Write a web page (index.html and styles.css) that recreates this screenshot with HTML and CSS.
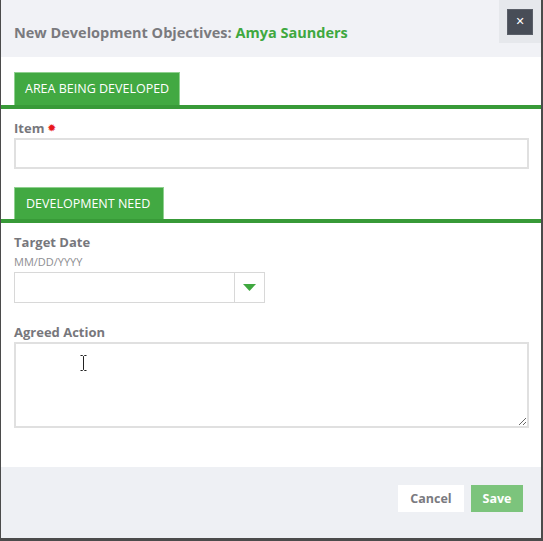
FILE: index.html
```html
<!DOCTYPE html>
<html>
<head>
<meta charset="utf-8">
<link rel="stylesheet" href="styles.css">
</head>
<body>
<div class="modal">
  <div class="header">
    <h1 class="title">New Development Objectives: <span class="name">Amya Saunders</span></h1>
    <div class="close-wrap"><button class="close">&#x2715;</button></div>
  </div>
  <div class="body">
    <div class="tabbar"><span class="tab">AREA BEING DEVELOPED</span></div>
    <div class="field">
      <label class="label">Item <span class="req">&#x2739;</span></label>
      <input class="input" type="text">
    </div>
    <div class="tabbar tabbar2"><span class="tab">DEVELOPMENT NEED</span></div>
    <div class="field">
      <label class="label">Target Date</label>
      <div class="hint">MM/DD/YYYY</div>
      <div class="date">
        <input class="date-input" type="text">
        <span class="date-btn"><svg width="13" height="7" viewBox="0 0 13 7"><path d="M0 0H13L6.5 7Z" fill="#3fa83f"/></svg></span>
      </div>
    </div>
    <div class="field field-area">
      <label class="label">Agreed Action</label>
      <textarea class="textarea"></textarea>
      <svg class="cursor" width="7" height="16" viewBox="0 0 7 16"><path d="M0.5 0.5H2.5L3.5 1.5L4.5 0.5H6.5M3.5 1.5V14.5M0.5 15.5H2.5L3.5 14.5L4.5 15.5H6.5" stroke="#222" fill="none" stroke-width="1"/></svg>
    </div>
  </div>
  <div class="footer">
    <button class="btn btn-cancel">Cancel</button>
    <button class="btn btn-save">Save</button>
  </div>
</div>
</body>
</html>
```
FILE: styles.css
```css
html, body {
  margin: 0;
  padding: 0;
  background: #4b4b4b;
}
body {
  width: 543px;
  height: 541px;
  overflow: hidden;
  font-family: "Open Sans", "Noto Sans", sans-serif;
}
.modal {
  margin-left: 1px;
  width: 540px;
  height: 538px;
  background: #fff;
  display: flex;
  flex-direction: column;
}
.header {
  height: 57px;
  background: #f1f2f6;
  display: flex;
  justify-content: space-between;
  align-items: flex-start;
}
.title {
  margin: 23px 0 0 13px;
  font-size: 14.5px;
  font-weight: 700;
  color: #7a7a7e;
  line-height: 20px;
}
.name { color: #3fa83f; }
.close-wrap {
  width: 42px;
  height: 43px;
  background: #e6e8ec;
  display: flex;
  justify-content: flex-start;
  align-items: flex-start;
}
.close {
  margin: 9px 0 0 8px;
  width: 26px;
  height: 26px;
  padding: 0;
  border: 1px solid #5a5f68;
  background: #484d57;
  color: #fff;
  font-size: 11px;
  font-weight: 700;
  line-height: 24px;
  font-family: "DejaVu Sans", sans-serif;
}
.body {
  flex: 1;
  padding: 15px 0 0 0;
  display: flex;
  flex-direction: column;
}
.tabbar {
  border-bottom: 4px solid #389a38;
  padding-left: 13px;
  display: flex;
}
.tab {
  background: #42a942;
  color: #fff;
  font-size: 12.5px;
  line-height: 32px;
  height: 32px;
  padding: 0 10px;
  border: 1px solid #8fd08f;
  border-bottom: none;
}
.tabbar2 { margin-top: 18px; }
.tabbar2 .tab { height: 31px; line-height: 31px; padding: 0 13px 0 11px; }
.field {
  padding: 0 14px 0 13px;
  display: flex;
  flex-direction: column;
}
.label {
  margin-top: 10px;
  font-size: 13px;
  font-weight: 700;
  color: #77777c;
  line-height: 18px;
  height: 18px;
}
.req {
  color: #e8161b;
  font-size: 9px;
  vertical-align: 2px;
}
.input {
  margin-top: 1px;
  height: 31px;
  box-sizing: border-box;
  border: 2px solid #e0e0e0;
  outline: none;
  width: 515px;
}
.hint {
  margin-top: 3px;
  font-size: 11px;
  color: #8e8e92;
  line-height: 16px;
}
.date {
  margin-top: 2px;
  width: 251px;
  height: 31px;
  box-sizing: border-box;
  border: 1px solid #d8d8d8;
  display: flex;
}
.date-input {
  flex: 1;
  border: none;
  outline: none;
  min-width: 0;
  padding: 0;
}
.date-btn {
  width: 29px;
  border-left: 1px solid #d8d8d8;
  display: flex;
  align-items: center;
  justify-content: center;
}
.field-area { position: relative; }
.field-area .label { margin-top: 20px; }
.textarea {
  margin-top: 1px;
  width: 515px;
  height: 86px;
  box-sizing: border-box;
  border: 2px solid #e0e0e0;
  outline: none;
  resize: vertical;
}
.cursor {
  position: absolute;
  left: 79px;
  top: 52px;
}
.footer {
  margin-top: 37px;
  height: 71px;
  background: #eef0f4;
  display: flex;
  justify-content: flex-end;
  align-items: flex-start;
  gap: 7px;
  padding-right: 18px;
}
.btn {
  margin-top: 18px;
  height: 27px;
  border: none;
  font-family: "Open Sans", "Noto Sans", sans-serif;
  font-weight: 700;
  font-size: 12.5px;
  padding: 0;
}
.btn-cancel {
  width: 66px;
  background: #fff;
  color: #7a7a80;
}
.btn-save {
  width: 52px;
  background: #7cc47c;
  color: #fff;
}
```
